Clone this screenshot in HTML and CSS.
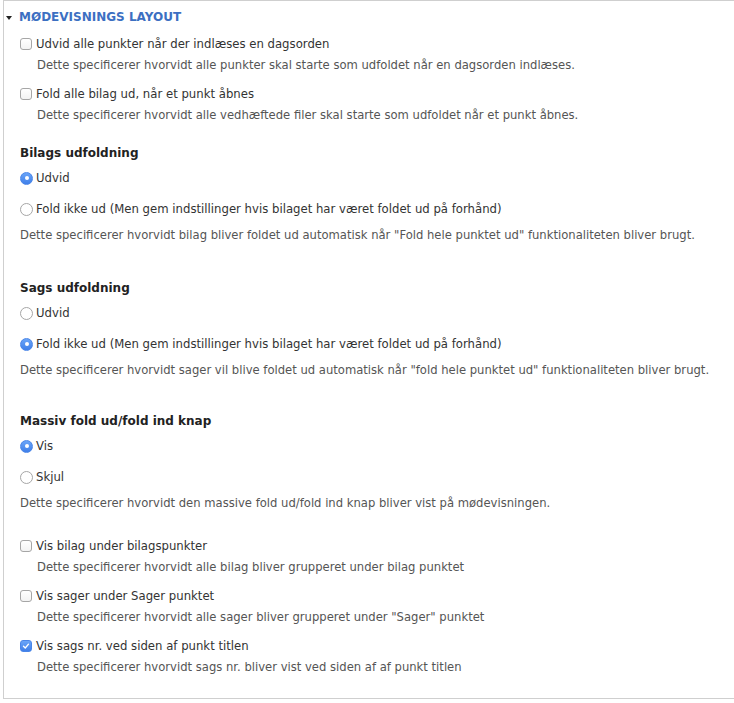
FILE: index.html
```html
<!DOCTYPE html>
<html lang="da">
<head>
<meta charset="utf-8">
<link rel="stylesheet" href="styles.css">
</head>
<body>
<div class="fieldset">
  <div class="legend">
    <span class="arrow"></span>
    <span class="legend-text">MØDEVISNINGS LAYOUT</span>
  </div>
  <div class="content">
    <div class="checks first">
      <div class="item">
        <label class="row"><span class="cb"></span>Udvid alle punkter når der indlæses en dagsorden</label>
        <div class="desc indent">Dette specificerer hvorvidt alle punkter skal starte som udfoldet når en dagsorden indlæses.</div>
      </div>
      <div class="item">
        <label class="row"><span class="cb"></span>Fold alle bilag ud, når et punkt åbnes</label>
        <div class="desc indent">Dette specificerer hvorvidt alle vedhæftede filer skal starte som udfoldet når et punkt åbnes.</div>
      </div>
    </div>

    <div class="group">
      <div class="heading">Bilags udfoldning</div>
      <div class="radios">
        <label class="row"><span class="rb on"></span>Udvid</label>
        <label class="row"><span class="rb"></span>Fold ikke ud (Men gem indstillinger hvis bilaget har været foldet ud på forhånd)</label>
      </div>
      <div class="desc gdesc">Dette specificerer hvorvidt bilag bliver foldet ud automatisk når "Fold hele punktet ud" funktionaliteten bliver brugt.</div>
    </div>

    <div class="group second">
      <div class="heading">Sags udfoldning</div>
      <div class="radios">
        <label class="row"><span class="rb"></span>Udvid</label>
        <label class="row"><span class="rb on"></span>Fold ikke ud (Men gem indstillinger hvis bilaget har været foldet ud på forhånd)</label>
      </div>
      <div class="desc gdesc">Dette specificerer hvorvidt sager vil blive foldet ud automatisk når "fold hele punktet ud" funktionaliteten bliver brugt.</div>
    </div>

    <div class="group third">
      <div class="heading">Massiv fold ud/fold ind knap</div>
      <div class="radios">
        <label class="row"><span class="rb on"></span>Vis</label>
        <label class="row"><span class="rb"></span>Skjul</label>
      </div>
      <div class="desc gdesc">Dette specificerer hvorvidt den massive fold ud/fold ind knap bliver vist på mødevisningen.</div>
    </div>

    <div class="checks last">
      <div class="item">
        <label class="row"><span class="cb"></span>Vis bilag under bilagspunkter</label>
        <div class="desc indent">Dette specificerer hvorvidt alle bilag bliver grupperet under bilag punktet</div>
      </div>
      <div class="item">
        <label class="row"><span class="cb"></span>Vis sager under Sager punktet</label>
        <div class="desc indent">Dette specificerer hvorvidt alle sager bliver grupperet under "Sager" punktet</div>
      </div>
      <div class="item">
        <label class="row"><span class="cb on"><svg viewBox="0 0 12 12" width="12" height="12"><path d="M3 6.3 L5.1 8.4 L9 3.8" fill="none" stroke="#fff" stroke-width="1.6" stroke-linecap="round" stroke-linejoin="round"/></svg></span>Vis sags nr. ved siden af punkt titlen</label>
        <div class="desc indent">Dette specificerer hvorvidt sags nr. bliver vist ved siden af af punkt titlen</div>
      </div>
    </div>
  </div>
</div>
</body>
</html>
```

FILE: styles.css
```css
html, body {
  margin: 0;
  padding: 0;
  background: #fff;
  overflow: hidden;
}
body {
  font-family: "DejaVu Sans", sans-serif;
  color: #333;
  font-size: 12px;
}
.fieldset {
  margin-left: 3px;
  border: 1px solid #cfcfcf;
  border-right: 0;
  padding: 0 0 22px 0;
}
.legend {
  display: flex;
  align-items: center;
  height: 20px;
  margin-top: 6px;
  padding-left: 2px;
}
.arrow {
  width: 0;
  height: 0;
  border-left: 3.5px solid transparent;
  border-right: 3.5px solid transparent;
  border-top: 4px solid #222;
  margin-right: 7px;
  margin-top: 1px;
}
.legend-text {
  color: #3c6fc2;
  font-weight: bold;
  font-size: 12px;
}
.content {
  padding-left: 16px;
  display: flex;
  flex-direction: column;
}
.checks {
  display: flex;
  flex-direction: column;
  gap: 10px;
}
.checks.first { margin-top: 7px; }
.checks.last { margin-top: 24px; }
.item {
  display: flex;
  flex-direction: column;
  gap: 2px;
}
.row {
  display: flex;
  align-items: center;
  height: 20px;
  font-size: 11.7px;
  color: #333;
  white-space: nowrap;
}
.desc {
  height: 18px;
  line-height: 18px;
  font-size: 11.6px;
  color: #555;
  white-space: nowrap;
}
.desc.indent { padding-left: 17px; }
.group {
  display: flex;
  flex-direction: column;
  margin-top: 19px;
}
.group.second { margin-top: 34px; }
.group.third { margin-top: 32px; }
.heading {
  height: 20px;
  line-height: 20px;
  font-weight: bold;
  font-size: 12px;
  color: #222;
  margin-bottom: 5px;
}
.radios {
  display: flex;
  flex-direction: column;
  gap: 11px;
}
.gdesc { margin-top: 7px; }
.cb {
  box-sizing: border-box;
  width: 12px;
  height: 12px;
  border: 1px solid #a6a6a6;
  border-radius: 3px;
  background: linear-gradient(#fff, #f3f3f3);
  margin-right: 4px;
  display: flex;
  align-items: center;
  justify-content: center;
  flex: none;
}
.cb.on {
  border-color: #4a86e8;
  background: linear-gradient(#6aa5f8, #3f7fe9);
}
.cb.on svg { display: block; }
.rb {
  box-sizing: border-box;
  width: 13px;
  height: 13px;
  border: 1px solid #a6a6a6;
  border-radius: 50%;
  background: #fff;
  margin-right: 3px;
  flex: none;
  display: flex;
  align-items: center;
  justify-content: center;
}
.rb.on {
  border-color: #4a86e8;
  background: linear-gradient(#6aa5f8, #3f7fe9);
}
.rb.on::after {
  content: "";
  width: 4px;
  height: 4px;
  border-radius: 50%;
  background: #fff;
}
```
